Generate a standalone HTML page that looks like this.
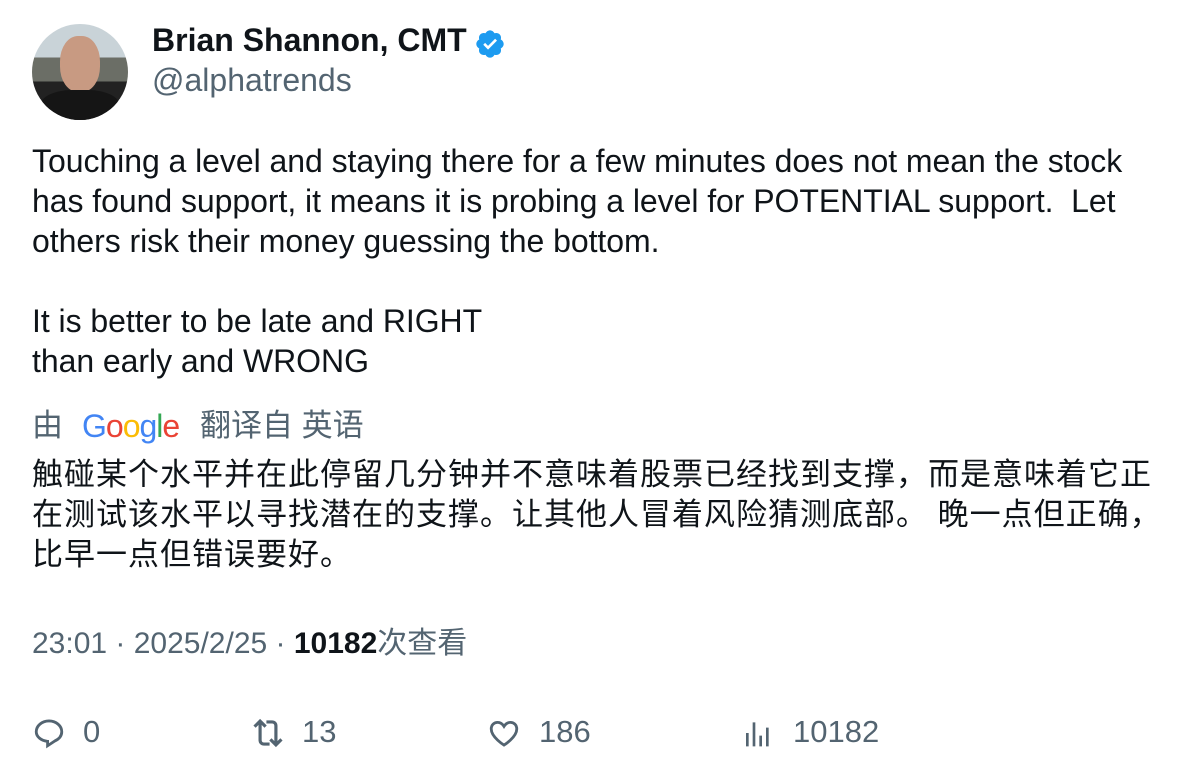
<!DOCTYPE html>
<html><head><meta charset="utf-8"><style>
body{margin:0;background:#fff;width:1196px;height:778px;overflow:hidden;font-family:"Liberation Sans","Noto Sans CJK SC",sans-serif;color:#0f1419;position:relative}
.a{position:absolute}
.body{left:32px;top:141px;font-size:32px;line-height:40px;white-space:pre;letter-spacing:-0.05px}
.zh{left:32px;top:455px;font-size:31px;line-height:40px;white-space:nowrap;letter-spacing:1px}
.gray{color:#536471}
.act{font-size:31px;color:#536471;top:714px}
</style></head><body>
<div class="a" style="left:32px;top:24px;width:96px;height:96px;border-radius:50%;overflow:hidden;background:linear-gradient(#c9d3d8 0 35%,#6b6e66 35% 60%,#222 60%)">
 <div class="a" style="left:28px;top:12px;width:40px;height:56px;border-radius:45%;background:#c89a82"></div>
 <div class="a" style="left:8px;top:66px;width:80px;height:40px;border-radius:40% 40% 0 0;background:#151515"></div>
</div>
<div class="a" style="left:152px;top:22px;font-size:32px;font-weight:bold">Brian Shannon, CMT</div>
<svg class="a" style="left:474px;top:28px" width="32" height="32" viewBox="0 0 24 24"><path fill="#1d9bf0" d="M22.25 12c0-1.430-.88-2.670-2.190-3.340.46-1.390.2-2.900-.81-3.910s-2.520-1.270-3.910-.81c-.66-1.310-1.910-2.190-3.340-2.190s-2.670.88-3.330 2.190c-1.400-.46-2.910-.2-3.920.81s-1.260 2.520-.8 3.910c-1.310.67-2.200 1.910-2.200 3.340s.89 2.670 2.200 3.340c-.46 1.390-.21 2.900.8 3.910s2.520 1.260 3.910.81c.67 1.310 1.910 2.190 3.340 2.190s2.680-.88 3.340-2.190c1.390.45 2.900.2 3.910-.81s1.270-2.520.81-3.910c1.310-.67 2.190-1.910 2.190-3.340z"/><path fill="#fff" d="M10.54 16.2l-3.6-3.6 1.4-1.4 2.2 2.2 5.3-5.3 1.4 1.4z"/></svg>
<div class="a gray" style="left:152px;top:62px;font-size:32px">@alphatrends</div>
<div class="a body">Touching a level and staying there for a few minutes does not mean the stock
has found support, it means it is probing a level for POTENTIAL support.  Let
others risk their money guessing the bottom.

It is better to be late and RIGHT
than early and WRONG</div>
<div class="a gray" style="left:32px;top:406px;font-size:31px;line-height:40px">由</div>
<div class="a" style="left:82px;top:406px;font-size:32px;line-height:40px;letter-spacing:-1px"><span style="color:#4285f4">G</span><span style="color:#ea4335">o</span><span style="color:#fbbc05">o</span><span style="color:#4285f4">g</span><span style="color:#34a853">l</span><span style="color:#ea4335">e</span></div>
<div class="a gray" style="left:200px;top:406px;font-size:31px;line-height:40px">翻译自 英语</div>
<div class="a zh">触碰某个水平并在此停留几分钟并不意味着股票已经找到支撑，而是意味着它正<br>在测试该水平以寻找潜在的支撑。让其他人冒着风险猜测底部。 晚一点但正确，<br>比早一点但错误要好。</div>
<div class="a gray" style="left:32px;top:624px;font-size:30px;line-height:40px">23:01 · 2025/2/25 · <b style="color:#0f1419">10182</b>次查看</div>
<svg class="a" style="left:32px;top:716px" width="34" height="34" viewBox="0 0 24 24"><path fill="none" stroke="#536471" stroke-width="2" d="M12 3.5c5 0 9 3.4 9 7.6 0 3-2.2 5.3-5 6.6L11 21v-3.1c-4.6-.4-8-3.4-8-6.8C3 6.9 7 3.5 12 3.5z"/></svg>
<div class="a act" style="left:83px">0</div>
<svg class="a" style="left:248px;top:714px" width="40" height="38" viewBox="0 0 24 24"><path fill="none" stroke="#536471" stroke-width="2" d="M3.5 8L7 4.5 10.5 8M7 4.5v12c0 1.4 1 2.5 2.5 2.5H13M20.5 16L17 19.5 13.5 16M17 19.5v-12C17 6 16 5 14.5 5H11"/></svg>
<div class="a act" style="left:302px">13</div>
<svg class="a" style="left:486px;top:716px" width="36" height="34" viewBox="0 0 24 24"><path fill="none" stroke="#536471" stroke-width="2" d="M12 20.5S3 15 3 9.2C3 6.3 5 4.5 7.5 4.5c2 0 3.5 1.2 4.5 2.8 1-1.6 2.5-2.8 4.5-2.8C19 4.5 21 6.3 21 9.2 21 15 12 20.5 12 20.5z"/></svg>
<div class="a act" style="left:539px">186</div>
<svg class="a" style="left:742px;top:716px" width="32" height="34" viewBox="0 0 24 24"><path fill="none" stroke="#536471" stroke-width="2" d="M4 22V12M9 22V4M14 22V14M19 22V8"/></svg>
<div class="a act" style="left:793px">10182</div>
</body></html>
